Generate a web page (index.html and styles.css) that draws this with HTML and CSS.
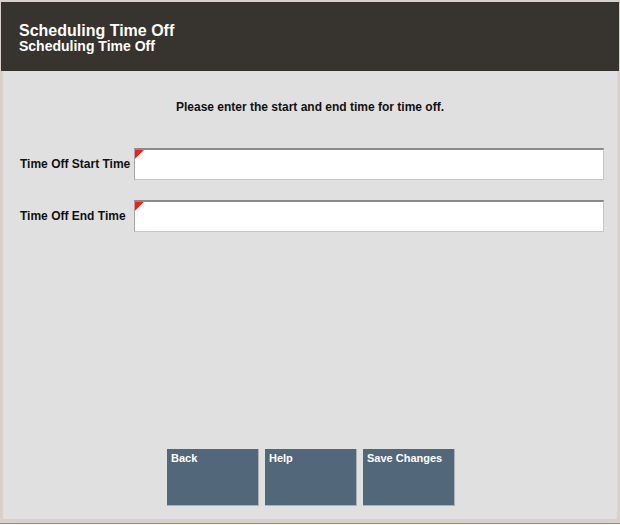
FILE: index.html
```html
<!DOCTYPE html>
<html lang="en">
<head>
    <meta charset="UTF-8">
    <title>Scheduling Time Off</title>
    <link rel="stylesheet" href="styles.css">
</head>
<body>
    <div class="screen">
        <div class="header">
            <div class="title">Scheduling Time Off</div>
            <div class="subtitle">Scheduling Time Off</div>
        </div>

        <div class="content">
            <p class="prompt">Please enter the start and end time for time off.</p>

            <!-- Fields -->
            <div class="field">
                <label for="start_time">Time Off Start Time</label>
                <div class="input required"><input type="text" id="start_time"></div>
            </div>
            <div class="field">
                <label for="end_time">Time Off End Time</label>
                <div class="input required"><input type="text" id="end_time"></div>
            </div>

            <!-- Buttons -->
            <div class="buttons">
                <button type="button">Back</button>
                <button type="button">Help</button>
                <button type="button">Save Changes</button>
            </div>
        </div>
    </div>
</body>
</html>
```

FILE: styles.css
```css
body {
    margin: 0;
    background: #ffffff;
    font-family: "Liberation Sans", Arial, sans-serif;
    font-weight: bold;
}
.screen {
    height: 524px;
    display: flex;
    flex-direction: column;
    background: #d9d1c9;
    border-bottom: 1px solid #8e8e8e;
    padding-top: 2px;
    box-sizing: border-box;
}
.header {
    height: 69px;
    margin: 0 1px;
    background: #37332f;
    color: #ffffff;
    padding: 20px 0 0 18px;
    box-sizing: border-box;
}
.title {
    font-size: 16px;
    line-height: 17px;
}
.subtitle {
    font-size: 14px;
    line-height: 15px;
}
.content {
    flex: 1;
    margin: 0 3px 4px;
    background: #e0e0e0;
    display: flex;
    flex-direction: column;
    padding: 0 13px 0 17px;
}
.prompt {
    margin: 29px 0 34px;
    padding-right: 4px;
    text-align: center;
    font-size: 12px;
    line-height: 14px;
    color: #111111;
}
.field {
    display: flex;
    align-items: center;
    margin-bottom: 20px;
}
.field label {
    width: 114px;
    font-size: 12px;
    color: #111111;
}
.input {
    flex: 1;
    height: 32px;
    box-sizing: border-box;
    background: #ffffff;
    border-top: 2px solid #8a8a8a;
    border-left: 1px solid #a8a8a8;
    border-right: 1px solid #c6c6c6;
    border-bottom: 1px solid #c6c6c6;
}
.required {
    background: linear-gradient(135deg, #ff1a1a 0, #ff1a1a 6px, transparent 6.5px) no-repeat, #ffffff;
    background-size: 9px 9px;
}
.input input {
    width: 100%;
    height: 100%;
    border: none;
    background: transparent;
    outline: none;
}
.buttons {
    margin-top: auto;
    margin-bottom: 13px;
    display: flex;
    justify-content: center;
    gap: 6px;
    padding-right: 2px;
}
.buttons button {
    width: 92px;
    height: 57px;
    background: #53677b;
    color: #ffffff;
    border: none;
    border-right: 1px solid #a9b1ba;
    border-bottom: 1px solid #a9b1ba;
    font-family: "Liberation Sans", Arial, sans-serif;
    font-weight: bold;
    font-size: 11px;
    text-align: left;
    padding: 3px 4px;
    display: flex;
    align-items: flex-start;
}
```
